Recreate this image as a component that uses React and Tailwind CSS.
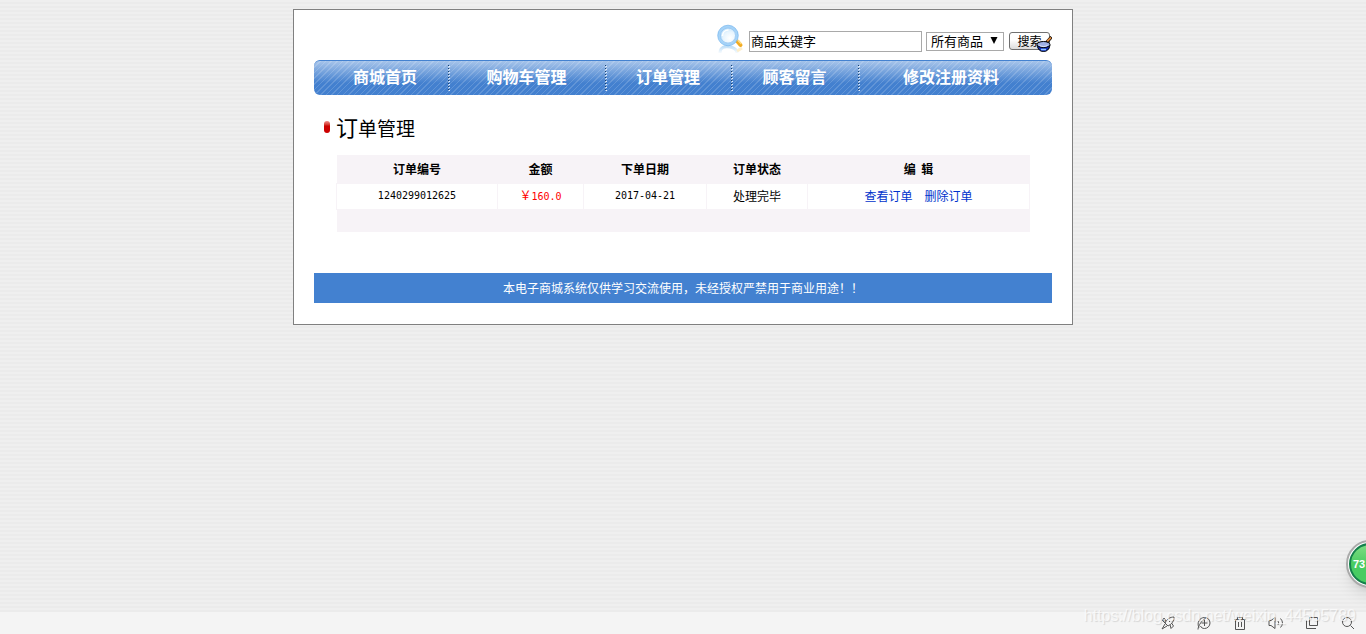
const navItems = [
    { label: "商城首页", width: "w-[134px] pl-2" },
    { label: "购物车管理", width: "w-[157px]" },
    { label: "订单管理", width: "w-[126px]" },
    { label: "顾客留言", width: "w-[127px]" },
    { label: "修改注册资料", width: "flex-1 pr-2" },
];

const orders = [
    { id: "1240299012625", amount: "160.0", date: "2017-04-21", status: "处理完毕" },
];

const Magnifier = () => (
    <svg width="28" height="32" viewBox="0 0 28 32" fill="none" aria-hidden="true">
        <defs>
            <radialGradient id="lens" cx="0.6" cy="0.65" r="0.7">
                <stop offset="0" stopColor="#ffffff" />
                <stop offset="0.5" stopColor="#e8f5fe" />
                <stop offset="1" stopColor="#b4dcfa" />
            </radialGradient>
            <linearGradient id="reflection" x1="0" y1="22" x2="0" y2="31" gradientUnits="userSpaceOnUse">
                <stop offset="0" stopColor="#b5d9f5" />
                <stop offset="1" stopColor="#ffffff" />
            </linearGradient>
        </defs>
        <path d="M3 30C3 24 8 23 13 24s7 3 7 6" stroke="url(#reflection)" strokeWidth="3" />
        <path d="M20 28l5-3" stroke="#fdeecb" strokeWidth="3" />
        <path d="M18 17l2 2" stroke="#9aa7b5" strokeWidth="2" />
        <path d="M20.500 18.500l3 3.500" stroke="#f2ab22" strokeWidth="4" strokeLinecap="round" />
        <path d="M21 17.500l3 3" stroke="#ffe08a" strokeWidth="1.200" strokeLinecap="round" />
        <circle cx="11" cy="12.500" r="9" fill="url(#lens)" stroke="#a5d3f8" strokeWidth="2.500" />
        <circle cx="11" cy="12.500" r="10.300" stroke="#74b4ee" strokeWidth="0.700" />
        <circle cx="11" cy="12.500" r="7.500" stroke="#7ab6ec" strokeWidth="0.600" />
        <path d="M5.500 13c0-4 3-6 6-6" stroke="#fff" strokeWidth="1.500" />
    </svg>
);

const Pan = () => (
    <svg width="16" height="16" viewBox="0 0 16 16" aria-hidden="true">
        <path d="M10.500 6.500L15.500 1" stroke="#000" strokeWidth="3.200" />
        <path d="M11 5.500L15 1.500" stroke="#e08a3c" strokeWidth="1.800" />
        <path d="M1 9c1 4.500 3 6.500 6.500 6.500S13 13.500 14 9z" fill="#1230b8" stroke="#000" />
        <ellipse cx="7.500" cy="8.500" rx="6.500" ry="3" fill="#9fb0e4" stroke="#000" />
        <path d="M3.500 9.500c2 1.300 6 1.300 8 0" stroke="#e4eaff" fill="none" />
        <path d="M5 13.500h5" stroke="#8fc4ff" strokeWidth="1.500" />
    </svg>
);

const SearchForm = () => (
    <form className="flex h-[50px] items-center justify-end" onSubmit={(e) => e.preventDefault()}>
        <div className="mr-1 pt-2">
            <Magnifier />
        </div>
        <input
            type="text"
            aria-label="商品关键字"
            defaultValue="商品关键字"
            className="mt-3 mr-1 h-[21px] w-[173px] border border-[#a9a9a9] bg-white px-px pb-px text-[13px]"
        />
        <div className="relative mt-3 mr-[5px]">
            <select
                aria-label="商品类别"
                className="block h-[19px] w-[78px] appearance-none border border-[#a9a9a9] bg-white pl-1 text-[13px] leading-4"
            >
                <option>所有商品</option>
            </select>
            <svg width="8" height="7" viewBox="0 0 8 7" className="pointer-events-none absolute top-[5px] right-1.5" aria-hidden="true">
                <path d="M0.500 0h7L4 7z" />
            </svg>
        </div>
        <div className="relative mt-3 pr-0.5">
            <button
                type="submit"
                className="block h-[18px] w-[41px] rounded-[3px] border border-[#707070] bg-linear-to-b from-white from-40% to-[#dcdcdc] text-[12px] leading-4"
            >
                搜索
            </button>
            <span className="absolute top-1 right-0">
                <Pan />
            </span>
        </div>
    </form>
);

const NavDivider = () => (
    <span className="-mr-0.5 flex h-[26px]">
        <span className="w-px bg-[repeating-linear-gradient(#17406f_0_1px,#ffffff66_1px_3px)]"></span>
        <span className="w-px bg-[repeating-linear-gradient(transparent_0_1px,#e8f1fc_1px_2px,transparent_2px_3px)]"></span>
    </span>
);

const NavBar = () => (
    <nav className="flex h-[35px] items-center overflow-hidden rounded-md border-t border-[#4482d0] bg-[repeating-linear-gradient(135deg,#ffffff28_0_1px,transparent_1px_4px),linear-gradient(#a6c4ea,#4380cf_65%)]">
        {navItems.map((item, index) => (
            <div key={item.label} className={`${item.width} flex items-center`}>
                {index > 0 && <NavDivider />}
                <a href="#" className="flex-1 pb-1 text-center text-[16px] leading-6 font-bold text-white">
                    {item.label}
                </a>
            </div>
        ))}
    </nav>
);

const OrderTable = () => (
    <table className="w-full table-fixed border-collapse text-center text-[12px] leading-4">
        <colgroup>
            <col className="w-[161px]" />
            <col className="w-[86px]" />
            <col className="w-[123px]" />
            <col className="w-[101px]" />
            <col />
        </colgroup>
        <thead>
            <tr className="h-7 bg-[#f7f3f7]">
                <th>订单编号</th>
                <th>金额</th>
                <th>下单日期</th>
                <th>订单状态</th>
                <th>编&nbsp; 辑</th>
            </tr>
        </thead>
        <tbody>
            {orders.map((order) => (
                <tr key={order.id} className="h-[26px] *:border *:border-[#f7f3f7]">
                    <td className="font-['DejaVu_Sans_Mono',monospace] text-[10px]">{order.id}</td>
                    <td className="text-[#ff0000]">
                        ￥<span className="font-['DejaVu_Sans_Mono',monospace] text-[10px]">{order.amount}</span>
                    </td>
                    <td className="font-['DejaVu_Sans_Mono',monospace] text-[10px]">{order.date}</td>
                    <td>{order.status}</td>
                    <td>
                        <a href="#" className="mr-3 text-[#0033cc]">查看订单</a>
                        <a href="#" className="text-[#0033cc]">删除订单</a>
                    </td>
                </tr>
            ))}
        </tbody>
        <tfoot>
            <tr className="h-[23px] bg-[#f7f3f7]">
                <td colSpan={5}></td>
            </tr>
        </tfoot>
    </table>
);

// Browser status bar with its tool icons
const StatusBar = () => (
    <footer className="relative flex h-[22px] items-center justify-end gap-[22px] bg-[#f4f4f4] pr-[11px] text-[#555]">
        <button aria-label="加速">
            <svg width="14" height="14" viewBox="0 0 14 14" fill="none" stroke="currentColor">
                <path d="M13 1C9 1 6 3 4 7l3 3c4-2 6-5 6-9zM5 5L1.500 4.500M5 5L3 2 1.500 4.500 4 7M9 8.500l1 4 2.500-2.500-2-3M4 8l-3 5 5-3M8 5l1 1" />
            </svg>
        </button>
        <button aria-label="浏览器模式">
            <svg width="14" height="14" viewBox="0 0 14 14" fill="none" stroke="currentColor">
                <path d="M2 11.500C-0.500 7 2.500 1.500 7.500 1.500c3.500 0 5.500 2.500 5.500 5.500s-2.500 5.500-5.500 5.500c-2 0-3.500-1-4-2.500M4.500 7h6M7.500 4v6M1 13.500C1 10 5 3.500 10 1.500" />
            </svg>
        </button>
        <button aria-label="清理">
            <svg width="14" height="14" viewBox="0 0 14 14" fill="none" stroke="currentColor">
                <path d="M1 3.500h12M4.500 3V1.500h5V3M2.500 4v9.500h9V4M5.500 6v5M8.500 6v5" />
            </svg>
        </button>
        <button aria-label="声音">
            <svg width="14" height="14" viewBox="0 0 14 14" fill="none" stroke="currentColor" className="overflow-visible">
                <path d="M0 4.500h2L6 1.500v11L2 9.500H0zM9 5q1.500 2 0 4M11.500 2.500q4 4.500 0 9" />
            </svg>
        </button>
        <button aria-label="窗口">
            <svg width="14" height="14" viewBox="0 0 14 14" fill="none" stroke="currentColor">
                <path d="M4.500 1.500h8v8h-8zM1.500 4v8.500H11" />
            </svg>
        </button>
        <button aria-label="缩放">
            <svg width="14" height="14" viewBox="0 0 14 14" fill="none" stroke="currentColor">
                <circle cx="6" cy="6" r="4.500" />
                <path d="M9.500 9.500L13 13" />
            </svg>
        </button>
        <span className="pointer-events-none absolute right-2.5 bottom-1.5 font-['Liberation_Sans',sans-serif] text-[16px] text-white/70 [text-shadow:1px_1px_1px_#00000020]">
            https://blog.csdn.net/weixin_44505789
        </span>
    </footer>
);

const App = () => {
    return (
        <div className="relative flex min-h-screen flex-col overflow-hidden bg-[repeating-linear-gradient(#efefef_0_2px,#ebebeb_2px_4px)] font-['Noto_Sans_CJK_SC',sans-serif] text-black">
            <div className="flex-1 pt-[9px]">
                <main className="mx-auto w-full max-w-[780px] border border-[#808080] bg-white px-5 pb-[21px]">
                    <SearchForm />
                    <NavBar />
                    <h1 className="flex h-[60px] items-center pt-1 pl-2.5 text-[19px] leading-8">
                        <span className="mr-1.5 h-3 w-[6px] rounded-full bg-linear-to-b from-[#e88] to-[#c00] to-40%"></span>
                        <span>
                            <span className="text-[22px]">订</span>单管理
                        </span>
                    </h1>
                    <section className="px-[22px] pb-[41px]">
                        <OrderTable />
                    </section>
                    <p className="h-[30px] bg-[#4381d0] text-center text-[12px] leading-[30px] text-white">
                        本电子商城系统仅供学习交流使用，未经授权严禁用于商业用途！！
                    </p>
                </main>
            </div>
            <StatusBar />
            <button className="absolute -right-7 bottom-[46px] flex size-12 items-center rounded-full border-2 border-[#aaa] bg-white p-px shadow-lg">
                <span className="flex size-[42px] items-center rounded-full border-2 border-[#15804c] bg-linear-to-b from-[#7ddc83] to-[#48cc62] to-50% pl-0.5 font-['Liberation_Sans',sans-serif] text-[11px] font-bold text-white">
                    73
                </span>
            </button>
        </div>
    );
};

export default App;
